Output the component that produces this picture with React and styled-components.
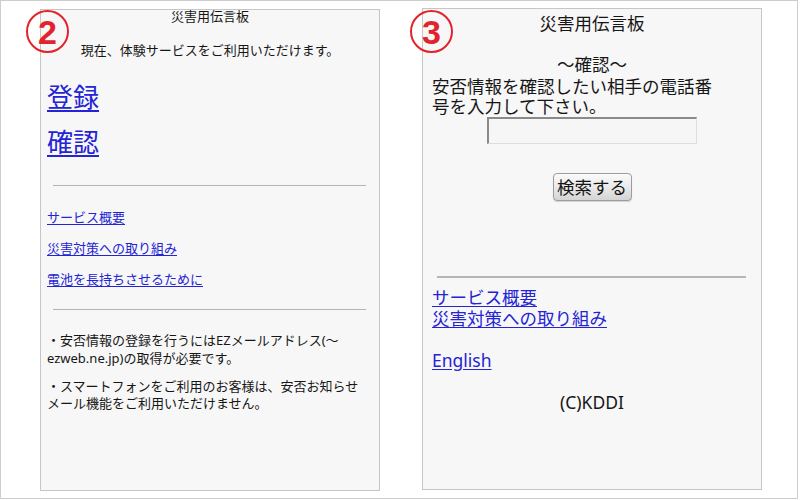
import React from "react";
import styled, { createGlobalStyle } from "styled-components";

const Global = createGlobalStyle`
  html, body { margin: 0; padding: 0; background: #ffffff; }
  body { font-family: "Noto Sans", "Noto Sans CJK JP", sans-serif; color: #161616; }
  * { box-sizing: border-box; }
`;

const Frame = styled.div`
  width: 798px;
  height: 499px;
  border: 1px solid #cdcdcd;
  display: flex;
  align-items: flex-start;
  gap: 42px;
  padding: 7px 0 0 39px;
`;

const PanelWrap = styled.div`
  position: relative;
  margin-top: ${(p) => p.$top || 0}px;
`;

const Panel = styled.div`
  width: 340px;
  height: 482px;
  background: #f7f7f7;
  border: 1px solid #c6c6c6;
  padding: ${(p) => p.$pad};
  display: flex;
  flex-direction: column;
  align-items: stretch;
`;

const Badge = styled.div`
  position: absolute;
  left: ${(p) => p.$x}px;
  top: ${(p) => p.$y}px;
  width: 43px;
  height: 43px;
  border: 2px solid #e3232c;
  border-radius: 50%;
  display: flex;
  align-items: center;
  justify-content: center;
  color: #e3232c;
  font-family: "Liberation Sans", Arial, sans-serif;
  font-weight: 700;
  font-size: 34px;
  line-height: 1;
  padding-top: 1px;
`;

const Text = styled.div`
  font-size: ${(p) => p.$size || 13}px;
  line-height: ${(p) => p.$lh || 16}px;
  margin-top: ${(p) => p.$mt || 0}px;
  text-align: ${(p) => (p.$center ? "center" : "left")};
  white-space: nowrap;
`;

const LinkLine = styled.a`
  display: block;
  align-self: flex-start;
  color: #2424d4;
  text-decoration: underline;
  text-underline-offset: ${(p) => p.$off || 2}px;
  font-size: ${(p) => p.$size || 13}px;
  line-height: ${(p) => p.$lh || 16}px;
  margin-top: ${(p) => p.$mt || 0}px;
  white-space: nowrap;
  cursor: pointer;
`;

const Rule = styled.div`
  height: ${(p) => p.$h || 1}px;
  background: ${(p) => p.$c || "#b0b0b0"};
  margin: ${(p) => p.$m};
`;

const FieldRow = styled.div`
  display: flex;
  justify-content: center;
  margin-top: ${(p) => p.$mt || 0}px;
`;

const Input = styled.input`
  width: 210px;
  height: 27px;
  background: #f6f6f6;
  border-style: solid;
  border-width: 2px 1px 1px 2px;
  border-color: #8a8a8a #dedede #dedede #8a8a8a;
  margin: 0;
  padding: 0 4px;
  outline: none;
`;

const Button = styled.button`
  width: 79px;
  height: 28px;
  border: 1px solid #9c9c9c;
  border-radius: 4px;
  background: linear-gradient(#fbfbfb, #e6e6e6 60%, #d4d4d4);
  box-shadow: 0 1px 1px rgba(0, 0, 0, 0.15);
  font-family: "Noto Sans CJK JP", sans-serif;
  font-size: 17.5px;
  line-height: 1;
  color: #151515;
  padding: 0;
  margin: 0;
`;

export default function App() {
  return (
    <>
      <Global />
      <Frame>
        <PanelWrap $top={1}>
          <Panel $pad="0 6px 0 6px">
            <Text $center $lh={13}>災害用伝言板</Text>
            <Text $center $mt={19}>現在、体験サービスをご利用いただけます。</Text>
            <LinkLine $size={26} $lh={30} $mt={24} $off={3}>登録</LinkLine>
            <LinkLine $size={26} $lh={30} $mt={15} $off={3}>確認</LinkLine>
            <Rule $m="28px 7px 0 6px" $c="#b4b4b4" />
            <LinkLine $mt={23}>サービス概要</LinkLine>
            <LinkLine $mt={15}>災害対策への取り組み</LinkLine>
            <LinkLine $mt={15}>電池を長持ちさせるために</LinkLine>
            <Rule $m="22px 7px 0 6px" $c="#b4b4b4" />
            <Text $lh={18} $mt={21}>
              ・安否情報の登録を行うにはEZメールアドレス(～
              <br />
              ezweb.ne.jp)の取得が必要です。
            </Text>
            <Text $lh={17} $mt={11}>
              ・スマートフォンをご利用のお客様は、安否お知らせ
              <br />
              メール機能をご利用いただけません。
            </Text>
          </Panel>
          <Badge $x={-14} $y={1}>2</Badge>
        </PanelWrap>
        <PanelWrap>
          <Panel $pad="4px 9px 0 9px">
            <Text $center $size={17.5} $lh={21}>災害用伝言板</Text>
            <Text $center $size={17.5} $lh={21} $mt={20}>～確認～</Text>
            <Text $size={17.5} $lh={20} $mt={1}>
              安否情報を確認したい相手の電話番
              <br />
              号を入力して下さい。
            </Text>
            <FieldRow $mt={1}>
              <Input type="text" />
            </FieldRow>
            <FieldRow $mt={29}>
              <Button type="button">検索する</Button>
            </FieldRow>
            <Rule $h={2} $m="75px 6px 0 5px" $c="#b6b6b6" />
            <LinkLine $size={17.5} $lh={21} $mt={9}>サービス概要</LinkLine>
            <LinkLine $size={17.5} $lh={21}>災害対策への取り組み</LinkLine>
            <LinkLine $size={17.5} $lh={21} $mt={21}>English</LinkLine>
            <Text $center $size={17.5} $lh={21} $mt={21}>(C)KDDI</Text>
          </Panel>
          <Badge $x={-12} $y={2}>3</Badge>
        </PanelWrap>
      </Frame>
    </>
  );
}
